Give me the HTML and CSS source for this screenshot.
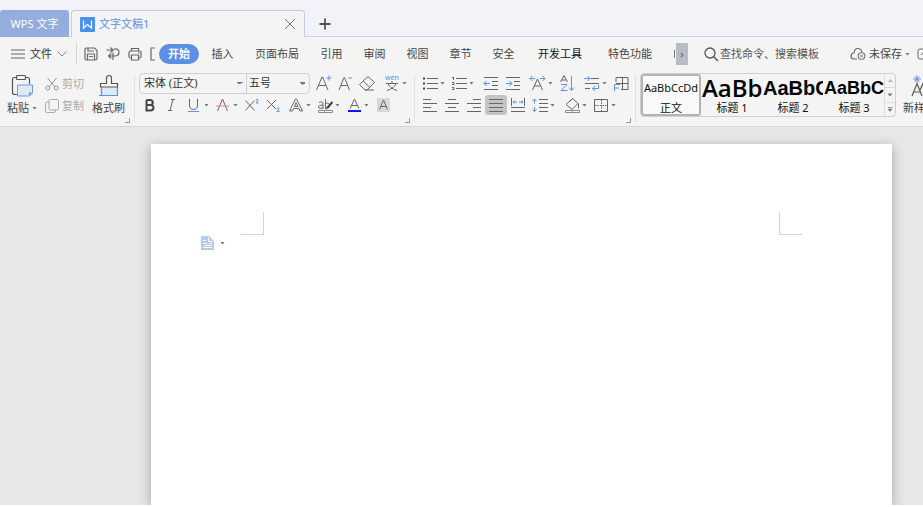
FILE: index.html
```html
<!DOCTYPE html>
<html lang="zh-CN">
<head>
<meta charset="utf-8">
<title>文字文稿1</title>
<link rel="stylesheet" href="styles.css">
</head>
<body>
<header class="tabs">
  <button class="app-tab">WPS 文字</button>
  <div class="doc-tab">
    <svg class="doc-logo" width="15" height="15" viewBox="0 0 15 15"><rect width="15" height="15" rx="1" fill="#4a90f0"/><path d="M3.500 3.500v7.500l4-3.500 4 3.500V3.500" fill="none" stroke="#fff" stroke-width="1.300"/></svg>
    <span class="doc-name">文字文稿1</span>
    <button class="plain" aria-label="关闭"><svg width="12" height="12" viewBox="0 0 12 12"><path d="M1 1l10 10M11 1L1 11" stroke="#777" fill="none"/></svg></button>
  </div>
  <button class="plain add" aria-label="新建"><svg width="12" height="12" viewBox="0 0 12 12"><path d="M6 .5v11M.5 6h11" stroke="#555" stroke-width="1.800"/></svg></button>
</header>

<nav class="menu">
  <button class="plain file">
    <svg width="14" height="10" viewBox="0 0 14 10"><path d="M0 1h14M0 5h14M0 9h14" stroke="#666" stroke-width="1.200"/></svg>
    <span>文件</span>
    <svg width="10" height="6" viewBox="0 0 10 6"><path d="M.5.500L5 5 9.500.500" fill="none" stroke="#888"/></svg>
  </button>
  <div class="quick">
    <button class="plain" aria-label="保存"><svg width="14" height="14" viewBox="0 0 14 14"><path d="M1 2.500Q1 1 2.500 1h8L13 3.500v8q0 1.500-1.500 1.500h-9Q1 13 1 11.500zM4 1v3h6M3.500 13V7h7v6M5 9.500h4" fill="none" stroke="#666" stroke-width="1.200"/></svg></button>
    <button class="plain" aria-label="输出"><svg width="14" height="14" viewBox="0 0 14 14"><path d="M.5 3H8M4.500.500L7 3 4.500 5.500M8 2q5-.5 5 3.200T8.500 9H2.500M5.200 6.500L2.500 9l2.700 2.500M7 5.500V13" fill="none" stroke="#666" stroke-width="1.200"/></svg></button>
    <button class="plain" aria-label="打印"><svg width="14" height="14" viewBox="0 0 14 14"><path d="M3.500 4V1.500h7V4M3.500 11h-1Q1 11 1 9.500v-4Q1 4 2.500 4h9Q13 4 13 5.500v4q0 1.500-1.500 1.500h-1M3.500 8h7v5h-7zM10 6h1.500" fill="none" stroke="#666" stroke-width="1.200"/></svg></button>
    <button class="plain half" aria-label="打印预览"><svg width="14" height="14" viewBox="0 0 14 14"><path d="M5 1H1v12h4" fill="none" stroke="#666" stroke-width="1.200"/></svg></button>
  </div>
  <div class="sections">
    <button class="section current">开始</button>
    <button class="section">插入</button>
    <button class="section wide">页面布局</button>
    <button class="section">引用</button>
    <button class="section">审阅</button>
    <button class="section">视图</button>
    <button class="section">章节</button>
    <button class="section">安全</button>
    <button class="section wider dark">开发工具</button>
    <button class="section wider">特色功能</button>
  </div>
  <span class="cut"></span>
  <button class="scroll" aria-label="更多选项卡">›</button>
  <label class="search">
    <svg width="15" height="15" viewBox="0 0 15 15"><circle cx="6" cy="6" r="5" fill="none" stroke="#555" stroke-width="1.300"/><path d="M9.700 9.700L14 14" stroke="#555" stroke-width="1.500"/></svg>
    <input type="text" placeholder="查找命令、搜索模板" aria-label="查找命令、搜索模板">
  </label>
  <button class="plain cloud">
    <svg width="16" height="14" viewBox="0 0 16 14"><path d="M7 12H4Q1 12 1 9t3-3q.3-4.500 4-4.500 3 0 4 3.500" fill="none" stroke="#666" stroke-width="1.100"/><circle cx="11.500" cy="9" r="3.500" fill="none" stroke="#666"/><path d="M10 7.500l3 3M13 7.500l-3 3" stroke="#666" stroke-width=".8"/></svg>
    <span>未保存</span><i class="caret"></i>
  </button>
  <button class="plain share" aria-label="分享"><svg width="12" height="12" viewBox="0 0 12 12"><path d="M7 1H3Q1 1 1 3v6q0 2 2 2h8M4 7q1-3 6-3" fill="none" stroke="#666"/></svg></button>
</nav>

<section class="ribbon">
  <div class="group clip-group">
    <button class="plain big paste">
      <svg width="24" height="24" viewBox="0 0 24 24"><path d="M6 3.500H4.500Q2.500 3.500 2.500 5.500v13q0 2 2 2H7M16 3.500h1.500q2 0 2 2V10" fill="none" stroke="#555" stroke-width="1.200"/><rect x="6.500" y="1.500" width="9" height="4" rx="1" fill="#f4f4f4" stroke="#555" stroke-width="1.200"/><path d="M7.500 11h15v8L19.500 22h-12z" fill="#dfe8f7" stroke="#6a9be8"/><path d="M22 18.500h-3V22z" fill="#5b93ea"/></svg>
      <span class="label">粘贴<i class="caret"></i></span>
    </button>
    <div class="edit">
      <button class="plain off"><svg width="14" height="14" viewBox="0 0 14 14"><path d="M2.500 1l7.500 9M11.500 1L4 10" fill="none" stroke="#999"/><circle cx="2.800" cy="11" r="2" fill="none" stroke="#999"/><circle cx="11.200" cy="11" r="2" fill="none" stroke="#999"/></svg>剪切</button>
      <button class="plain off"><svg width="14" height="14" viewBox="0 0 14 14"><rect x="4" y=".5" width="9.500" height="10.500" rx="1.500" fill="none" stroke="#aaa"/><path d="M4 3H2Q.5 3 .5 4.500v7.500q0 1.500 1.500 1.500h7q1.500 0 1.500-1.500V11" fill="none" stroke="#aaa"/></svg>复制</button>
    </div>
    <button class="plain big">
      <svg width="24" height="24" viewBox="0 0 24 24"><path d="M3.500 13.500h17v8h-17z" fill="#dfe8f7"/><path d="M4.500 13v8.500h-2M2 21.500h18.500V13" fill="none" stroke="#5b93ea" stroke-width="1.200"/><path d="M3.500 13V9.500H9.500V4Q9.500 1.500 12 1.500t2.500 2.500v5.500h6V13z" fill="#f4f4f4" stroke="#555" stroke-width="1.200"/></svg>
      <span class="label">格式刷</span>
    </button>
    <i class="corner"></i>
  </div>

  <div class="group font-group">
    <div class="row">
      <div class="combos">
        <select class="face" aria-label="字体"><option>宋体 (正文)</option></select>
        <select class="size" aria-label="字号"><option>五号</option></select>
      </div>
      <button class="tool" aria-label="增大字号"><svg viewBox="0 0 20 20"><path d="M3.500 17L9 4h.5L15 17M5.500 12.500H13" class="k"/><path d="M13.500 5h5M16 2.500v5" class="b"/></svg></button>
      <button class="tool" aria-label="减小字号"><svg viewBox="0 0 20 20"><path d="M4 17L9 4.500h.5l5 12.500M6 12.500h6.500" class="k"/><path d="M13 5h4" class="b"/></svg></button>
      <button class="tool" aria-label="清除格式"><svg viewBox="0 0 20 20"><path d="M2.500 11.500L11 3.500l6.500 6L10 17H8zM6 8l7 6.500M8 17h9" class="k"/></svg></button>
      <button class="tool more lead" aria-label="拼音指南"><svg viewBox="0 0 20 20"><text x="10" y="7" class="tiny b-fill">wén</text><path d="M4 10.500h12M10 8v2.500M6 10.500q2 5 9 7M14 10.500q-2 5-9 7" class="k"/></svg><i class="caret"></i></button>
    </div>
    <div class="row">
      <button class="tool" aria-label="加粗"><svg viewBox="0 0 20 20"><path d="M6.500 5v10.500H10q3.500 0 3.500-2.800T10 10H6.500M6.500 5H10q2.800 0 2.800 2.500T10 10" class="k bold"/></svg></button>
      <button class="tool" aria-label="倾斜"><svg viewBox="0 0 20 20"><path d="M9 4.500h4M6 15.500h4M11 4.500l-3 11" class="k"/></svg></button>
      <button class="tool more" aria-label="下划线"><svg viewBox="0 0 20 20"><path d="M5.500 4v6q0 4.500 4 4.500t4-4.500V4" class="k"/><path d="M4 16.500h11" class="b"/></svg><i class="caret"></i></button>
      <button class="tool more" aria-label="删除线"><svg viewBox="0 0 20 20"><path d="M4.500 16L9.500 4l5 12" class="k"/><path d="M3 11h13" class="r"/></svg><i class="caret"></i></button>
      <button class="tool" aria-label="上标"><svg viewBox="0 0 20 20"><path d="M3.500 5.500l9 10M12.500 5.500l-9 10" class="k"/><path d="M14 5q1-1.500 2 0 0 1-2 3h2.500" class="b"/></svg></button>
      <button class="tool" aria-label="下标"><svg viewBox="0 0 20 20"><path d="M3 5l9 9M12 5l-9 9" class="k"/><path d="M13 13.500q1-1.500 2 0 0 1-2 3h2.500" class="b"/></svg></button>
      <button class="tool more" aria-label="文字效果"><svg viewBox="0 0 20 20"><path d="M3.500 16L9.500 4h1l6 12H14l-1-2.500H7.500L6.500 16zM8.500 11.500L10 7.500l2 4z" class="k"/></svg><i class="caret"></i></button>
      <button class="tool more" aria-label="突出显示"><svg viewBox="0 0 20 20"><path d="M4 7.500q4-2 4 1.500v5M8 10q-4.500 0-4.500 2T8 13M10.500 4v10M10.500 8.500q4-1.500 4 2t-4 2.500" class="k"/><path d="M12 13l5.500-6" class="k bold"/><path d="M3.500 15.500h14v2h-14z" fill="#fff" stroke="#888"/><path d="M9 17l3-3" class="r"/></svg><i class="caret"></i></button>
      <button class="tool more" aria-label="字体颜色"><svg viewBox="0 0 20 20"><path d="M6 13.500L10.500 4l4.500 9.500M7.500 10.500h6" class="k"/><path d="M4 15h13v2H4z" fill="#1414f0"/></svg><i class="caret"></i></button>
      <button class="tool" aria-label="字符底纹"><svg viewBox="0 0 20 20"><path d="M4 3h13v14H4z" fill="#d8d8d8"/><path d="M6.500 14.500l4-9.500 4 9.500M8 11.500h5" class="k"/></svg></button>
    </div>
    <i class="corner"></i>
  </div>

  <div class="group para-group">
    <div class="row">
      <button class="tool more" aria-label="项目符号"><svg viewBox="0 0 20 20"><path d="M7 5.500h11M7 10.500h11M7 15.500h11" class="k"/><path d="M3 5.500h2M3 10.500h2M3 15.500h2" class="k bold"/></svg><i class="caret"></i></button>
      <button class="tool more" aria-label="编号"><svg viewBox="0 0 20 20"><path d="M7 5.500h11M7 10.500h11M7 15.500h11M4.500 4v3M3 4.500h1.500M3 9.500h2v2H3M3 14.500h2v2H3" class="k"/></svg><i class="caret"></i></button>
      <button class="tool lead" aria-label="减少缩进"><svg viewBox="0 0 20 20"><path d="M3 4.500h14M11 8.500h6M11 12.500h6M3 16.500h14" class="k"/><path d="M3 10.500h6M5.500 8L3 10.500 5.500 13" class="b"/></svg></button>
      <button class="tool" aria-label="增加缩进"><svg viewBox="0 0 20 20"><path d="M3 4.500h14M11 8.500h6M11 12.500h6M3 16.500h14" class="k"/><path d="M3 10.500h6M6.500 8L9 10.500 6.500 13" class="b"/></svg></button>
      <button class="tool more lead" aria-label="中文版式"><svg viewBox="0 0 20 20"><path d="M4.500 17L9.500 6l5 11M6.500 13h6" class="k"/><path d="M2 5.500h5M4.500 3L2 5.500 4.500 8M12 5.500h5M14.500 3L17 5.500 14.500 8" class="b"/></svg><i class="caret"></i></button>
      <button class="tool" aria-label="排序"><svg viewBox="0 0 20 20"><path d="M3.500 9L7 2.500 10.500 9M5 7h4" class="k"/><path d="M4 11.500h6l-6 6h6.500M14.500 3v14M12 14.500l2.500 3 2.500-3" class="b"/></svg></button>
      <button class="tool more lead" aria-label="换行"><svg viewBox="0 0 20 20"><path d="M9 5.500h8M3 10.500h14M3 15.500h5" class="k"/><path d="M2 5.500h6M5.500 3L8 5.500 5.500 8M16.500 12v3.500H11M13 13l-2.500 2.500L13 18" class="b"/></svg><i class="caret"></i></button>
      <button class="tool" aria-label="制表位"><svg viewBox="0 0 20 20"><path d="M5 9V4.500h12v12h-7M11.500 4.500v12M5 10.500h12" class="k"/><path d="M3.500 18V11.500H9M3.500 15H8" class="b"/></svg></button>
    </div>
    <div class="row">
      <button class="tool" aria-label="左对齐"><svg viewBox="0 0 20 20"><path d="M3 4.500h8M3 8.500h14M3 12.500h8M3 16.500h14" class="k"/></svg></button>
      <button class="tool" aria-label="居中"><svg viewBox="0 0 20 20"><path d="M6 4.500h8M3 8.500h14M6 12.500h8M3 16.500h14" class="k"/></svg></button>
      <button class="tool" aria-label="右对齐"><svg viewBox="0 0 20 20"><path d="M9 4.500h8M3 8.500h14M9 12.500h8M3 16.500h14" class="k"/></svg></button>
      <button class="tool pressed" aria-label="两端对齐"><svg viewBox="0 0 20 20"><path d="M3 4.500h14M3 8.500h14M3 12.500h14M3 16.500h14" class="k"/></svg></button>
      <button class="tool" aria-label="分散对齐"><svg viewBox="0 0 20 20"><path d="M3.500 3v8M16.500 3v8M3 12.500h14M3 16.500h14" class="k"/><path d="M5 7h4M6.500 5.500L5 7l1.500 1.500M11 7h4M13.500 5.500L15 7l-1.500 1.500" class="b"/></svg></button>
      <button class="tool more" aria-label="行距"><svg viewBox="0 0 20 20"><path d="M9 4.500h9M9 8.500h9M9 12.500h9M9 16.500h9" class="k"/><path d="M4.500 4v4.500M2.500 6l2-2 2 2M4.500 12v4.500M2.500 14.500l2 2 2-2" class="b"/></svg><i class="caret"></i></button>
      <button class="tool more lead" aria-label="底纹"><svg viewBox="0 0 20 20"><path d="M4 9.500L10.500 3.500l5.500 5L10 14.500zM10.500 3.500L8 6.500M16.500 8.500v5" class="k"/><path d="M3.500 15.500h14v2h-14z" fill="#fff" stroke="#888"/><path d="M9 18l3-3" class="r"/></svg><i class="caret"></i></button>
      <button class="tool more" aria-label="边框"><svg viewBox="0 0 20 20"><path d="M3.500 4.500h13v12h-13z" class="k"/><path d="M10.500 5v11M4 10.500h12" class="k" stroke-dasharray="1.500 1"/></svg><i class="caret"></i></button>
    </div>
    <i class="corner"></i>
  </div>

  <div class="group style-group">
    <div class="gallery">
      <button class="style chosen"><span class="sample">AaBbCcDd</span><span>正文</span></button>
      <button class="style"><span class="sample h1">AaBb</span><span>标题 1</span></button>
      <button class="style"><span class="sample h2">AaBbC</span><span>标题 2</span></button>
      <button class="style"><span class="sample h3">AaBbCc</span><span>标题 3</span></button>
      <div class="pager">
        <button aria-label="上一行"><i class="caret up"></i></button>
        <button aria-label="下一行"><i class="caret"></i></button>
        <button aria-label="全部样式"><i class="caret bar"></i></button>
      </div>
    </div>
    <button class="plain big new-style">
      <svg width="24" height="24" viewBox="0 0 24 24"><path d="M4 22L9 9.500 14 22M6 18h6M12 16l3-6.500L20 22" fill="none" stroke="#555" stroke-width="1.200"/><path d="M9 1v8M5 5h8M6.500 2.500l5 5M11.500 2.500l-5 5" stroke="#5b93ea"/></svg>
      <span class="label">新样式</span>
    </button>
  </div>
</section>

<main class="canvas">
  <article class="page">
    <div class="margins"><i class="mark left"></i><i class="mark right"></i></div>
    <button class="plain paste-options" aria-label="粘贴选项">
      <svg width="13" height="14" viewBox="0 0 13 14"><path d="M0 0h8l5 5v9H0z" fill="#b5caea"/><path d="M7.500 1v4.500H12M2 4.500h3M2 7.500h4M2 11.500h9M4 9.500h7M8 7.500h3" fill="none" stroke="#fff"/></svg>
      <i class="caret"></i>
    </button>
  </article>
</main>
</body>
</html>
```

FILE: styles.css
```css
* { box-sizing: border-box; }

body {
  margin: 0;
  height: 100vh;
  display: flex;
  flex-direction: column;
  overflow: hidden;
  background: #fff;
  color: #444;
  font: 11px/16px "Noto Sans", "Noto Sans CJK SC", sans-serif;
}

button, input, select {
  font: inherit;
  color: inherit;
  margin: 0;
  padding: 0;
  border: 0;
  background: none;
}

button { flex: none; white-space: nowrap; }
svg { display: block; flex: none; }

.plain { display: flex; align-items: center; }

.caret {
  flex: none;
  width: 5px;
  height: 3px;
  background: #777;
  clip-path: polygon(0 0, 100% 0, 50% 100%);
}

/* Title tabs */
.tabs {
  flex: none;
  display: flex;
  height: 37px;
  padding-top: 10px;
  background: #f2f3f8;
  box-shadow: inset 0 -1px #cbd2e1;
}

.app-tab {
  width: 69px;
  border-radius: 3px 3px 0 0;
  background: #94addc;
  color: #fff;
}

.doc-tab {
  display: flex;
  align-items: center;
  width: 234px;
  margin-left: 2px;
  padding: 0 8px;
  border: 1px solid #c5cde0;
  border-bottom: 0;
  border-radius: 4px 4px 0 0;
  background: #f4f4f4;
  color: #5b8fe8;
}

.doc-name { flex: 1; margin-left: 4px; }
.add { margin-left: 14px; }

/* Menu line */
.menu {
  flex: none;
  display: flex;
  align-items: center;
  height: 34px;
  background: #f4f4f4;
}

.file {
  width: 77px;
  height: 22px;
  padding-left: 11px;
  gap: 5px;
  border-right: 1px solid #d4d4d4;
  color: #333;
}

.quick { flex: none; display: flex; gap: 8px; padding-left: 7px; width: 82px; }
.half { width: 6px; overflow: hidden; }
.sections { display: flex; flex: none; }
.section { width: 43px; height: 20px; }
.section.wide { width: 66px; }
.section.wider { width: 70px; }
.dark { color: #111; }

.section.current {
  width: 40px;
  margin-right: 2px;
  border-radius: 10px;
  background: #5b8fe8;
  color: #fff;
  font-weight: bold;
}

.cut { flex: none; width: 1px; height: 8px; margin: 0 1px 0 9px; background: #777; }
.scroll { width: 12px; height: 22px; background: #b8bcc6; color: #555; }
.search { flex: none; display: flex; align-items: center; gap: 1px; width: 146px; margin-left: 16px; }
.search input { flex: 1; min-width: 0; outline: 0; }
.search input::placeholder { color: #555; opacity: 1; }
.cloud { gap: 3px; }
.share { margin-left: 7px; }

/* Ribbon */
.ribbon {
  flex: none;
  display: flex;
  height: 56px;
  background: #f4f4f4;
  border-bottom: 1px solid #d8d8d8;
}

.group { position: relative; flex: none; padding: 1px 4px 0 5px; }
.group + .group { background: linear-gradient(#e0e0e0, #e0e0e0) 0 4px / 1px 47px no-repeat; }

.corner {
  position: absolute;
  right: 4px;
  bottom: 3px;
  width: 5px;
  height: 5px;
  border: solid #999;
  border-width: 0 1px 1px 0;
}

.clip-group { display: flex; width: 134px; padding: 3px 7px 0; }
.big { flex-direction: column; justify-content: flex-start; height: 48px; }
.label { display: flex; align-items: center; gap: 3px; margin-top: 2px; }
.edit { display: flex; flex-direction: column; gap: 6px; margin: 2px 8px 0; }
.off { gap: 3px; color: #aaa; }

.font-group { width: 280px; }
.para-group { width: 221px; }
.row { display: flex; align-items: center; height: 22px; }

.combos {
  display: flex;
  width: 172px;
  height: 21px;
  margin-right: 2px;
  border: 1px solid #d0d0d0;
  border-radius: 4px;
}

.combos select {
  appearance: none;
  padding-left: 4px;
  color: #333;
  background: linear-gradient(45deg, transparent 50%, #777 50%) right 6px center / 3px 3px no-repeat,
    linear-gradient(-45deg, transparent 50%, #777 50%) right 3px center / 3px 3px no-repeat;
}

.face { width: 106px; }
.combos .size { flex: 1; padding-left: 2px; border-left: 1px solid #d0d0d0; }

.tool { display: flex; align-items: center; justify-content: center; width: 22px; height: 20px; }
.more { width: 29px; padding-right: 2px; }
.lead { margin-left: 3px; }
.pressed { border-radius: 3px; background: #c4c4c4; }
.tool svg { width: 20px; height: 20px; }

.k { fill: none; stroke: #666; stroke-width: 1; }
.b { fill: none; stroke: #5b93ea; stroke-width: 1; }
.r { fill: none; stroke: #e58080; stroke-width: 1; }
.k.bold { stroke: #444; stroke-width: 2; }
.b-fill { fill: #5b93ea; }
.tiny { font-size: 7px; text-anchor: middle; }

/* Style gallery */
.style-group { display: flex; padding: 2px 0 0 5px; }

.gallery {
  display: flex;
  width: 256px;
  height: 44px;
  border: 1px solid #d0d0d0;
  border-radius: 4px;
  color: #111;
}

.style {
  display: flex;
  flex-direction: column;
  align-items: center;
  width: 60px;
  height: 42px;
  overflow: hidden;
  padding-top: 2px;
}

.style + .style { margin-left: 1px; }
.chosen { border: 2px solid #b4b4b4; border-radius: 3px; background: #fafafa; padding: 0; }
.sample { height: 24px; line-height: 24px; }
.style:not(.chosen) .sample { align-self: stretch; text-align: left; color: #000; font-weight: bold; overflow: hidden; }
.style .sample.h1 { font-family: "Open Sans", "Noto Sans", sans-serif; font-size: 24px; font-weight: 600; }
.sample.h2, .sample.h3 { font-family: "Liberation Sans", sans-serif; }
.sample.h2 { font-size: 20px; }
.sample.h3 { font-size: 18px; }

.pager { flex: 1; display: flex; flex-direction: column; }
.pager button { flex: 1; display: flex; align-items: center; justify-content: center; border-left: 1px solid #ddd; }
.pager button + button { border-top: 1px solid #ddd; }
.up { transform: rotate(180deg); background: #bbb; }
.bar { height: 5px; clip-path: polygon(0 0, 100% 0, 100% 1px, 0 1px, 0 2px, 100% 2px, 50% 100%, 0 2px); }

.new-style { margin: 1px 0 0 7px; }

/* Document */
.canvas {
  flex: 1;
  min-height: 0;
  display: flex;
  margin-bottom: 2px;
  padding: 17px 31px 0 151px;
  overflow: hidden;
  background: #e7e7e7;
}

.page {
  flex: 1;
  padding: 68px 50px 0;
  background: #fff;
  box-shadow: 0 3px 11px rgba(0, 0, 0, .3);
}

.margins { display: flex; justify-content: space-between; padding: 0 40px; }
.mark { width: 23px; height: 23px; border: 0 solid #d4d4d4; border-bottom-width: 1px; }
.left { border-right-width: 1px; }
.right { border-left-width: 1px; }
.paste-options { gap: 6px; margin-top: 1px; }
```
